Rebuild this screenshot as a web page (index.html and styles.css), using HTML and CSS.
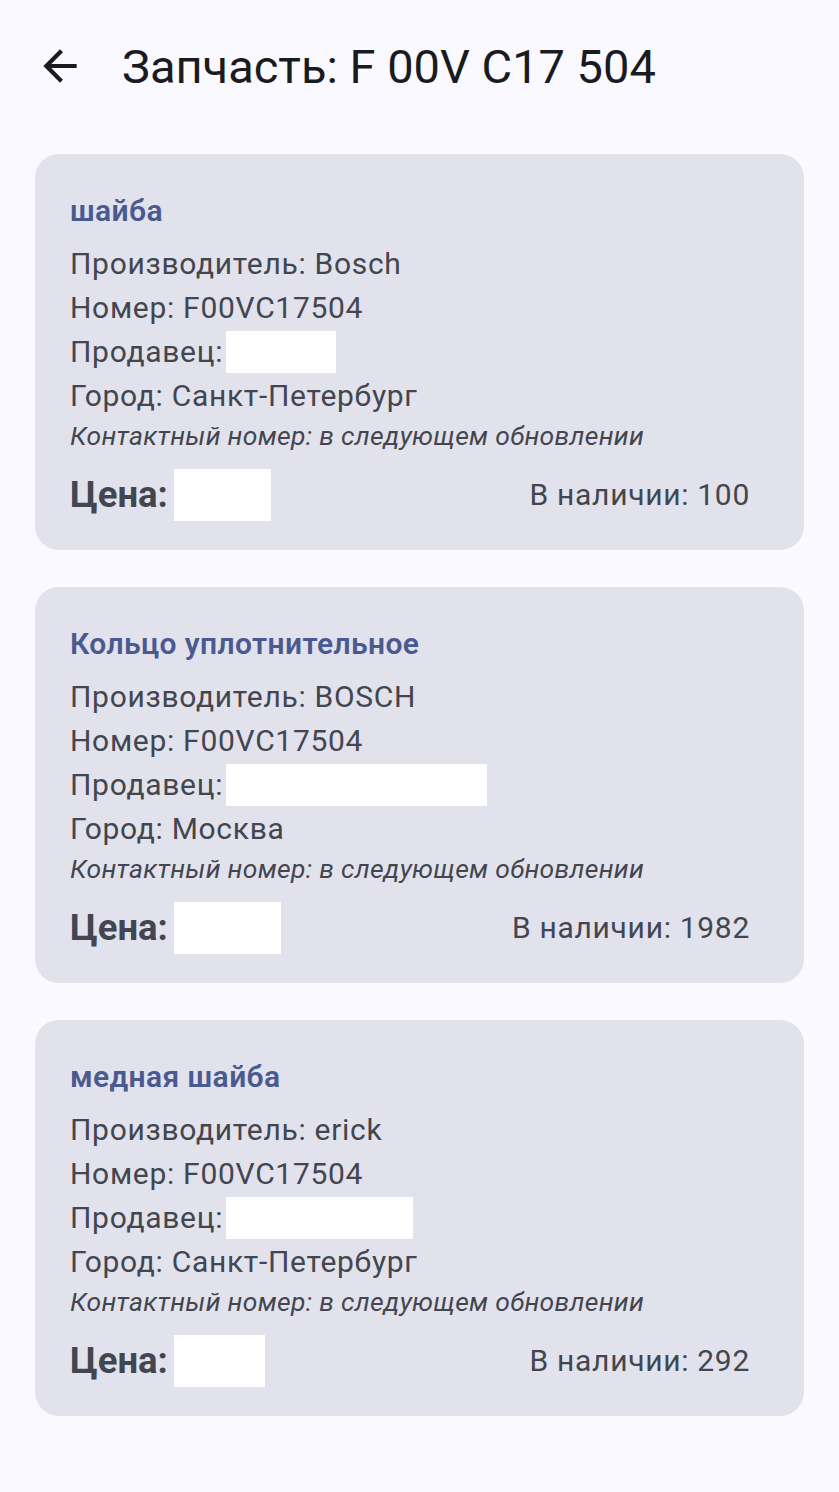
FILE: index.html
```html
<!DOCTYPE html>
<html lang="ru">
<head>
    <meta charset="UTF-8">
    <meta name="viewport" content="width=device-width, initial-scale=1.0">
    <title>Запчасть: F 00V C17 504</title>
    <link rel="stylesheet" href="styles.css">
</head>
<body>

    <!-- Top app bar -->
    <div class="topbar">
        <button class="back" aria-label="Назад">
            <svg viewBox="0 0 24 24" width="50" height="50">
                <path d="M20 11H7.83l5.59-5.59L12 4l-8 8 8 8 1.41-1.41L7.83 13H20v-2z" fill="currentColor"/>
            </svg>
        </button>
        <h1 class="page-title">Запчасть: F 00V C17 504</h1>
    </div>

    <!-- Offers -->
    <div class="list">

        <div class="card">
            <div class="card-title">шайба</div>
            <div class="card-line">Производитель: Bosch</div>
            <div class="card-line">Номер: F00VC17504</div>
            <div class="card-line">Продавец:<span class="mask mask-seller" style="width: 110px"></span></div>
            <div class="card-line">Город: Санкт-Петербург</div>
            <div class="card-note">Контактный номер: в следующем обновлении</div>
            <div class="card-footer">
                <div class="price">Цена:<span class="mask mask-price" style="width: 97px"></span></div>
                <div class="stock">В наличии: 100</div>
            </div>
        </div>

        <div class="card">
            <div class="card-title">Кольцо уплотнительное</div>
            <div class="card-line">Производитель: BOSCH</div>
            <div class="card-line">Номер: F00VC17504</div>
            <div class="card-line">Продавец:<span class="mask mask-seller" style="width: 261px"></span></div>
            <div class="card-line">Город: Москва</div>
            <div class="card-note">Контактный номер: в следующем обновлении</div>
            <div class="card-footer">
                <div class="price">Цена:<span class="mask mask-price" style="width: 107px"></span></div>
                <div class="stock">В наличии: 1982</div>
            </div>
        </div>

        <div class="card">
            <div class="card-title">медная шайба</div>
            <div class="card-line">Производитель: erick</div>
            <div class="card-line">Номер: F00VC17504</div>
            <div class="card-line">Продавец:<span class="mask mask-seller" style="width: 187px"></span></div>
            <div class="card-line">Город: Санкт-Петербург</div>
            <div class="card-note">Контактный номер: в следующем обновлении</div>
            <div class="card-footer">
                <div class="price">Цена:<span class="mask mask-price" style="width: 91px"></span></div>
                <div class="stock">В наличии: 292</div>
            </div>
        </div>

    </div>

</body>
</html>
```

FILE: styles.css
```css
body {
    font-family: Roboto, "Noto Sans", sans-serif;
    background-color: #f9f9ff;
    color: #44464f;
    margin: 0;
    padding: 0;
}
.topbar {
    display: flex;
    align-items: center;
    height: 132px;
    padding-left: 35px;
}
.back {
    display: flex;
    align-items: center;
    justify-content: center;
    width: 50px;
    height: 50px;
    padding: 0;
    border: none;
    background: none;
    color: #1a1b20;
    cursor: pointer;
}
.page-title {
    margin: 0 0 0 37px;
    font-size: 47px;
    font-weight: 400;
    color: #1a1b20;
    letter-spacing: 0;
}
.list {
    display: flex;
    flex-direction: column;
    gap: 37px;
    padding: 22px 35px 0;
}
.card {
    background-color: #e1e2ec;
    border-radius: 24px;
    padding: 39px 35px 28px;
}
.card-title {
    font-size: 30px;
    font-weight: 600;
    line-height: 36px;
    letter-spacing: 0.4px;
    color: #4a5a90;
    margin-bottom: 13px;
}
.card-line {
    display: flex;
    align-items: center;
    font-size: 30px;
    line-height: 44px;
    letter-spacing: 0.7px;
    height: 44px;
}
.card-note {
    font-size: 26.5px;
    font-style: italic;
    line-height: 36px;
    letter-spacing: 0.3px;
}
.card-footer {
    display: flex;
    align-items: center;
    justify-content: space-between;
    height: 55px;
    margin-top: 13px;
    padding-right: 19px;
}
.price {
    display: flex;
    align-items: center;
    font-size: 36.5px;
    font-weight: 700;
}
.stock {
    font-size: 30px;
    letter-spacing: 0.7px;
}
.mask {
    display: inline-block;
    background-color: #fff;
}
.mask-seller {
    height: 42px;
    margin-left: 3px;
}
.mask-price {
    height: 52px;
    margin-left: 6px;
}
```
